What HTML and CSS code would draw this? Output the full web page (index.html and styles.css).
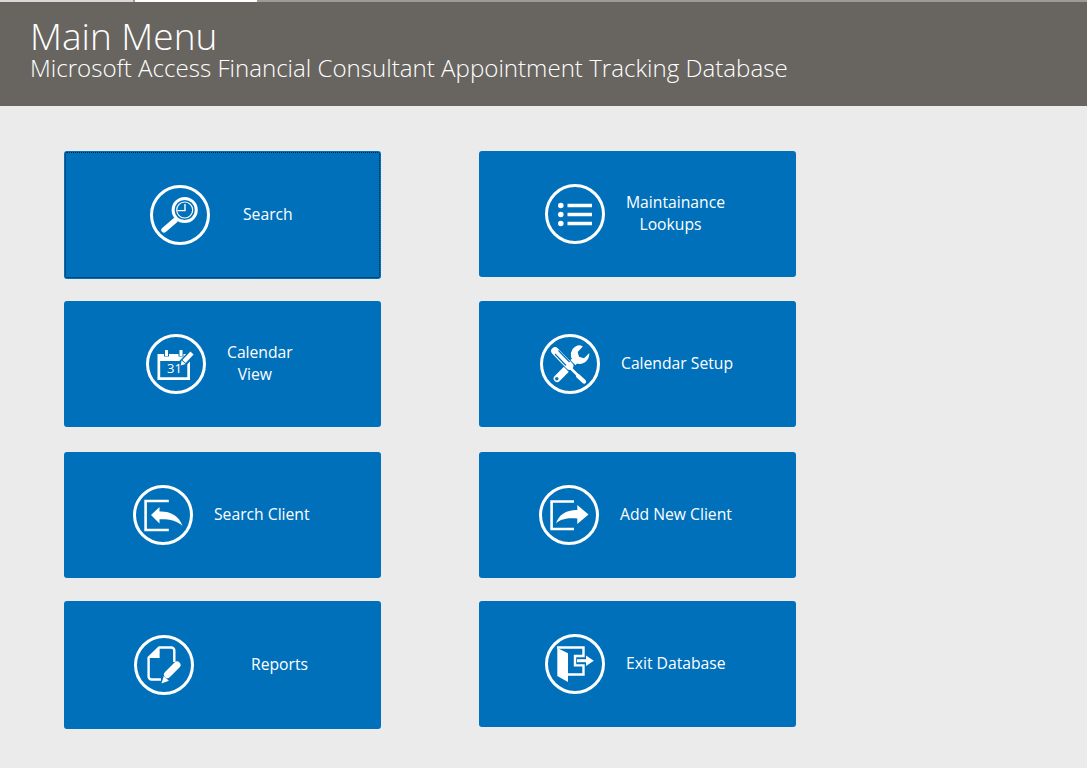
FILE: index.html
```html
<!DOCTYPE html>
<html lang="en">

<head>
  <meta charset="UTF-8">
  <title>Main Menu</title>
  <link rel="stylesheet" href="styles.css">
</head>

<body>
  <div class="tab-strip">
    <div class="tab tab-side"></div>
    <div class="tab tab-active"></div>
    <div class="tab tab-rest"></div>
  </div>

  <div class="header">
    <h1>Main Menu</h1>
    <div class="subtitle">Microsoft Access Financial Consultant Appointment Tracking Database</div>
  </div>

  <div class="menu">
    <button class="menu-btn tall focused pos-search">
      <svg class="icon" viewBox="0 0 60 60">
        <circle class="ring" cx="30" cy="30" r="28.5" />
        <circle class="line" cx="34.7" cy="25" r="11.6" stroke-width="3" />
        <circle class="line" cx="34.7" cy="25" r="8" stroke-width="1.2" />
        <path class="line" d="M35 19V25.6H27.5" stroke-width="1.4" />
        <path class="line" d="M14 45L25 35.5" stroke-width="5.4" stroke-linecap="round" />
      </svg>
      <span class="label">Search</span>
    </button>

    <button class="menu-btn pos-lookups">
      <svg class="icon" viewBox="0 0 60 60">
        <circle class="ring" cx="30" cy="30" r="28.5" />
        <path class="line" d="M22.5 21.5H47M22.5 30.5H47M22.5 39.5H47" stroke-width="3.4" />
        <circle class="fill" cx="15.8" cy="21.5" r="2.8" />
        <circle class="fill" cx="15.8" cy="30.5" r="2.8" />
        <circle class="fill" cx="15.8" cy="39.5" r="2.8" />
      </svg>
      <span class="label">Maintainance<span class="line-short">Lookups</span></span>
    </button>

    <button class="menu-btn pos-calendar">
      <svg class="icon" viewBox="0 0 60 60">
        <circle class="ring" cx="30" cy="30" r="28.5" />
        <path class="fill" fill-rule="evenodd" d="M11.5 20H44V46H11.5ZM14.2 27V43.2H41.3V27Z" />
        <rect class="cut" x="18" y="15.5" width="5" height="7" />
        <rect class="cut" x="32.5" y="15.5" width="5" height="7" />
        <rect class="fill" x="19" y="16" width="3" height="6" />
        <rect class="fill" x="33.5" y="16" width="3" height="6" />
        <path class="cut-line" d="M36 30L47 18.5" stroke-width="8" />
        <path class="line" d="M38 27.5L46 19" stroke-width="4.4" />
        <path class="fill" d="M34.7 31.5L35.6 26.4L39.6 30Z" />
        <text class="cal-day" x="28.5" y="39">31</text>
      </svg>
      <span class="label">Calendar<span class="line-short">View</span></span>
    </button>

    <button class="menu-btn pos-setup">
      <svg class="icon" viewBox="0 0 60 60">
        <circle class="ring" cx="30" cy="30" r="28.5" />
        <path class="line" d="M36 25.5L17.2 44.5" stroke-width="7" stroke-linecap="round" />
        <circle class="cut" cx="16.8" cy="44.8" r="1.7" />
        <path class="fill" fill-rule="evenodd" d="M39 11.2A10 10 0 0 0 31 23.5L36.5 29.5A10 10 0 0 0 49.3 19L44 24.2L39 22.8L37.7 18L42.8 12.6Q41 11.2 39 11.2Z" />
        <path class="cut-line" d="M14 16L34 36.5" stroke-width="9.5" />
        <path class="line" d="M15 17L29.5 32" stroke-width="7.6" stroke-linecap="round" />
        <path class="cut-line" d="M15 20L26 31.5M18.5 16.5L29.5 28" stroke-width="1.2" />
        <path class="line" d="M30 33.5L44.5 48" stroke-width="2.6" stroke-linecap="round" />
        <path class="line" d="M38 42L44 47.5" stroke-width="4.2" stroke-linecap="round" />
      </svg>
      <span class="label">Calendar Setup</span>
    </button>

    <button class="menu-btn pos-find">
      <svg class="icon" viewBox="0 0 60 60">
        <circle class="ring" cx="30" cy="30" r="28.5" />
        <path class="line" d="M35.8 16H12.6V45H35.8" stroke-width="2.6" />
        <path class="fill" d="M18 30L26.5 22V26.6C37 26.2 46 30.5 49.5 41C44.5 35.8 36 34 26.5 34.3V38.5Z" />
      </svg>
      <span class="label">Search Client</span>
    </button>

    <button class="menu-btn pos-add">
      <svg class="icon" viewBox="0 0 60 60">
        <circle class="ring" cx="30" cy="30" r="28.5" />
        <path class="line" d="M35 16.5H12.6V44H35" stroke-width="2.6" />
        <path class="fill" d="M49.5 29.5L38.3 20V25C27 24.8 19.5 30 17 38.5C22 33.8 29 32.8 38.3 33.6V39Z" />
      </svg>
      <span class="label">Add New Client</span>
    </button>

    <button class="menu-btn tall pos-reports">
      <svg class="icon" viewBox="0 0 60 60">
        <circle class="ring" cx="30" cy="30" r="28.5" />
        <path class="line" d="M40.3 27V15.5A3 3 0 0 0 37.3 12.5H25L14.6 22.5V41.5A3 3 0 0 0 17.6 44.5H27" stroke-width="2.4" stroke-linejoin="round" />
        <path class="fill" d="M25.6 13V23H15Z" />
        <path class="line" d="M33.5 39.5L43 30" stroke-width="7" stroke-linecap="round" />
        <path class="fill" d="M27.5 48.5L29.8 41L34.9 45.8Z" />
      </svg>
      <span class="label">Reports</span>
    </button>

    <button class="menu-btn pos-exit">
      <svg class="icon" viewBox="0 0 60 60">
        <circle class="ring" cx="30" cy="30" r="28.5" />
        <path class="line" d="M12 13.5H38.5V22H30V31.4H38.5V40.5H23" stroke-width="2.4" />
        <path class="fill" d="M12.3 14L23 19.3V48L12.3 42Z" />
        <path class="line" d="M32 26.7H42" stroke-width="3" />
        <path class="fill" d="M48.8 26.7L41 21.5V31.9Z" />
      </svg>
      <span class="label">Exit Database</span>
    </button>
  </div>
</body>

</html>
```

FILE: styles.css
```css
* {
  margin: 0;
  padding: 0;
  box-sizing: border-box;
}

body {
  font-family: 'Open Sans', 'Noto Sans', sans-serif;
  height: 100vh;
  background-color: #ebebeb;
  overflow: hidden;
}

.tab-strip {
  display: flex;
  height: 2px;
  background-color: #9c9a96;
}

.tab-side {
  width: 133px;
  background-color: #d8d8d8;
}

.tab-active {
  width: 122px;
  margin-left: 2px;
  background-color: #ffffff;
}

.header {
  background-color: #686560;
  height: 104px;
  padding: 13px 30px 0;
  color: #ffffff;
}

.header h1 {
  font-size: 37px;
  font-weight: 300;
  line-height: 41px;
}

.subtitle {
  font-size: 24.1px;
  font-weight: 300;
  line-height: 24px;
  white-space: nowrap;
}

.menu {
  display: grid;
  grid-template-columns: 317px 317px;
  grid-template-rows: 150px 151px 149px 128px;
  column-gap: 98px;
  align-items: start;
  padding: 45px 0 0 64px;
}

.menu-btn {
  display: flex;
  align-items: center;
  height: 126px;
  background-color: #0070bb;
  border: none;
  border-radius: 3px;
  color: #ffffff;
  font-family: inherit;
  font-size: 15.7px;
  line-height: 22px;
  text-align: center;
}

.menu-btn.tall {
  height: 128px;
}

.menu-btn.focused {
  outline: 1px dotted #04203a;
  outline-offset: -2px;
}

.icon {
  width: 60px;
  height: 60px;
  flex-shrink: 0;
}

.label {
  display: block;
  padding-bottom: 2px;
  white-space: nowrap;
}

.line-short {
  display: block;
  padding-right: 10px;
}

.ring,
.line {
  fill: none;
  stroke: #ffffff;
}

.ring {
  stroke-width: 3px;
}

.fill {
  fill: #ffffff;
}

.cut {
  fill: #0070bb;
}

.cut-line {
  fill: none;
  stroke: #0070bb;
}

.cal-day {
  fill: #ffffff;
  font-size: 13px;
  text-anchor: middle;
}

.pos-search { padding-left: 86px; gap: 33px; }
.pos-lookups { padding-left: 66px; gap: 21px; }
.pos-calendar { padding-left: 82px; gap: 21px; }
.pos-setup { padding-left: 61px; gap: 21px; }
.pos-find { padding-left: 69px; gap: 21px; }
.pos-add { padding-left: 60px; gap: 21px; }
.pos-reports { padding-left: 70px; gap: 57px; }
.pos-exit { padding-left: 66px; gap: 21px; }
```
